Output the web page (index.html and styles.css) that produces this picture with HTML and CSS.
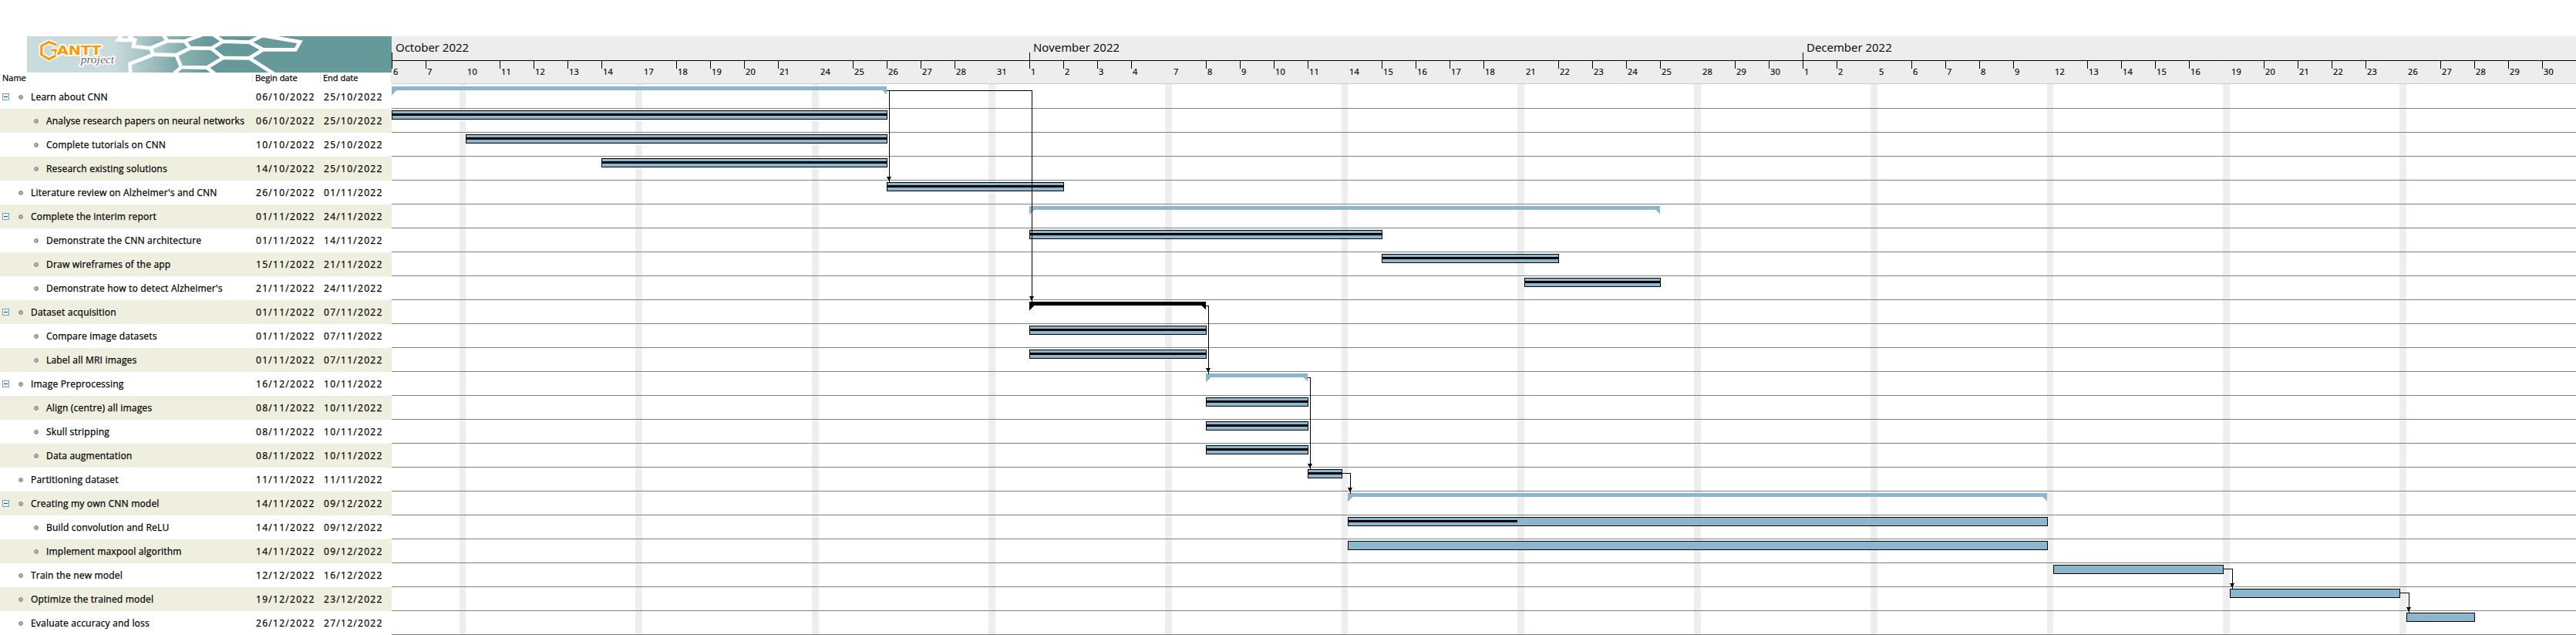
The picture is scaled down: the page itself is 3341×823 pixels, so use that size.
FILE: index.html
```html
<!DOCTYPE html>
<html lang="en">
<head>
<meta charset="utf-8">
<title>GanttProject</title>
<link rel="stylesheet" href="styles.css">
</head>
<body>
<div class="app">
<section class="tasks">
  <svg class="banner" viewBox="105 51 1419 141" preserveAspectRatio="none">
    <defs>
      <linearGradient id="bg" x1="0" x2="1"><stop offset="0" stop-color="#c9dbdb"/><stop offset=".24" stop-color="#c9dbdb"/><stop offset=".34" stop-color="#9dbdbd"/><stop offset=".5" stop-color="#669999"/><stop offset="1" stop-color="#669999"/></linearGradient>
      <linearGradient id="h1" x1="0" x2="1"><stop offset="0" stop-color="#bcd2d2"/><stop offset="1" stop-color="#76a4a4"/></linearGradient>
      <linearGradient id="h2" x1="0" x2="1"><stop offset="0" stop-color="#8fb5b5"/><stop offset="1" stop-color="#669999"/></linearGradient>
    </defs>
    <rect x="105" y="51" width="1419" height="141" fill="url(#bg)"/>
    <path d="M585 97L652 69L718 70L740 97L686 124L597 122Z" fill="url(#h1)"/>
    <path d="M505 158L597 122L686 124L705 171L678 195H508Z" fill="url(#h1)"/>
    <path d="M740 97L822 98L868 135L805 173L705 171L686 124Z" fill="url(#h2)"/>
    <path d="M525 67L652 69L585 97L518 90Z" fill="url(#h1)"/>
    <g class="mesh">
      <path d="M472 48L460 65L525 67L518 90L585 97L597 122L505 158L508 195"/>
      <path d="M500 51L525 67M585 97L652 69L636 48M652 69L718 70L785 46"/>
      <path d="M718 70L740 97L686 124L597 122M740 97L822 98L868 71L832 46M868 71L970 74L1025 46"/>
      <path d="M822 98L868 135L805 173L705 171L686 124M705 171L678 195M805 173L836 197"/>
      <path d="M868 135L970 136L1024 103L970 74M970 136L1066 197M1024 103L1150 103L1167 73L1010 46"/>
    </g>
    <path class="mark-halo" d="M218 84L190 73L161 88V122L190 140L217 126V105H201"/>
    <path class="mark" d="M218 84L190 73L161 88V122L190 140L217 126V105H201"/>
    <text class="brand" x="222" y="123" textLength="172" lengthAdjust="spacingAndGlyphs">ANTT</text>
    <text class="brand-sub" x="314" y="156" textLength="130" lengthAdjust="spacingAndGlyphs">project</text>
  </svg>
  <div class="cols"><span class="c-name">Name</span><span class="c-begin">Begin date</span><span class="c-end">End date</span></div>
  <div class="task group"><i class="toggle"></i><i class="dot"></i><span class="name">Learn about CNN</span><span class="date">06/10/2022</span><span class="date">25/10/2022</span></div>
  <div class="task child"><i class="dot"></i><span class="name">Analyse research papers on neural networks</span><span class="date">06/10/2022</span><span class="date">25/10/2022</span></div>
  <div class="task child"><i class="dot"></i><span class="name">Complete tutorials on CNN</span><span class="date">10/10/2022</span><span class="date">25/10/2022</span></div>
  <div class="task child"><i class="dot"></i><span class="name">Research existing solutions</span><span class="date">14/10/2022</span><span class="date">25/10/2022</span></div>
  <div class="task"><i class="dot"></i><span class="name">Literature review on Alzheimer's and CNN</span><span class="date">26/10/2022</span><span class="date">01/11/2022</span></div>
  <div class="task group"><i class="toggle"></i><i class="dot"></i><span class="name">Complete the interim report</span><span class="date">01/11/2022</span><span class="date">24/11/2022</span></div>
  <div class="task child"><i class="dot"></i><span class="name">Demonstrate the CNN architecture</span><span class="date">01/11/2022</span><span class="date">14/11/2022</span></div>
  <div class="task child"><i class="dot"></i><span class="name">Draw wireframes of the app</span><span class="date">15/11/2022</span><span class="date">21/11/2022</span></div>
  <div class="task child"><i class="dot"></i><span class="name">Demonstrate how to detect Alzheimer's</span><span class="date">21/11/2022</span><span class="date">24/11/2022</span></div>
  <div class="task group"><i class="toggle"></i><i class="dot"></i><span class="name">Dataset acquisition</span><span class="date">01/11/2022</span><span class="date">07/11/2022</span></div>
  <div class="task child"><i class="dot"></i><span class="name">Compare image datasets</span><span class="date">01/11/2022</span><span class="date">07/11/2022</span></div>
  <div class="task child"><i class="dot"></i><span class="name">Label all MRI images</span><span class="date">01/11/2022</span><span class="date">07/11/2022</span></div>
  <div class="task group"><i class="toggle"></i><i class="dot"></i><span class="name">Image Preprocessing</span><span class="date">16/12/2022</span><span class="date">10/11/2022</span></div>
  <div class="task child"><i class="dot"></i><span class="name">Align (centre) all images</span><span class="date">08/11/2022</span><span class="date">10/11/2022</span></div>
  <div class="task child"><i class="dot"></i><span class="name">Skull stripping</span><span class="date">08/11/2022</span><span class="date">10/11/2022</span></div>
  <div class="task child"><i class="dot"></i><span class="name">Data augmentation</span><span class="date">08/11/2022</span><span class="date">10/11/2022</span></div>
  <div class="task"><i class="dot"></i><span class="name">Partitioning dataset</span><span class="date">11/11/2022</span><span class="date">11/11/2022</span></div>
  <div class="task group"><i class="toggle"></i><i class="dot"></i><span class="name">Creating my own CNN model</span><span class="date">14/11/2022</span><span class="date">09/12/2022</span></div>
  <div class="task child"><i class="dot"></i><span class="name">Build convolution and ReLU</span><span class="date">14/11/2022</span><span class="date">09/12/2022</span></div>
  <div class="task child"><i class="dot"></i><span class="name">Implement maxpool algorithm</span><span class="date">14/11/2022</span><span class="date">09/12/2022</span></div>
  <div class="task"><i class="dot"></i><span class="name">Train the new model</span><span class="date">12/12/2022</span><span class="date">16/12/2022</span></div>
  <div class="task"><i class="dot"></i><span class="name">Optimize the trained model</span><span class="date">19/12/2022</span><span class="date">23/12/2022</span></div>
  <div class="task"><i class="dot"></i><span class="name">Evaluate accuracy and loss</span><span class="date">26/12/2022</span><span class="date">27/12/2022</span></div>
</section>
<section class="timeline">
  <header class="scale">
    <div class="months"><span class="month oct">October 2022</span><span class="month nov">November 2022</span><span class="month dec">December 2022</span></div>
    <div class="days">
      <div class="week"><b>6</b><b>7</b></div>
      <div class="week long"><b class="mon">10</b><b>11</b><b>12</b><b>13</b><b>14</b></div>
      <div class="week long"><b class="mon">17</b><b>18</b><b>19</b><b>20</b><b>21</b></div>
      <div class="week long"><b class="mon">24</b><b>25</b><b>26</b><b>27</b><b>28</b></div>
      <div class="week long"><b class="mon">31</b><b>1</b><b>2</b><b>3</b><b>4</b></div>
      <div class="week"><b class="mon">7</b><b>8</b><b>9</b><b>10</b><b>11</b></div>
      <div class="week long"><b class="mon">14</b><b>15</b><b>16</b><b>17</b><b>18</b></div>
      <div class="week long"><b class="mon">21</b><b>22</b><b>23</b><b>24</b><b>25</b></div>
      <div class="week long"><b class="mon">28</b><b>29</b><b>30</b><b>1</b><b>2</b></div>
      <div class="week"><b class="mon">5</b><b>6</b><b>7</b><b>8</b><b>9</b></div>
      <div class="week long"><b class="mon">12</b><b>13</b><b>14</b><b>15</b><b>16</b></div>
      <div class="week long"><b class="mon">19</b><b>20</b><b>21</b><b>22</b><b>23</b></div>
      <div class="week"><b class="mon">26</b><b>27</b><b>28</b><b>29</b><b>30</b></div>
    </div>
  </header>
  <!-- x axis: page pixels, 44 per working day; y axis: 31 per task row, first row at 110 -->
  <svg class="chart" width="2833" height="714" viewBox="508 109 2833 714" shape-rendering="crispEdges">
    <defs>
      <pattern id="rows" x="0" y="110" width="31" height="31" patternUnits="userSpaceOnUse"><rect y="30" width="31" height="1" fill="#808080"/></pattern>
      <path id="arrow" d="M-3 0H3V1H2V3H1V5H-1V3H-2V1H-3Z"/>
    </defs>
    <path class="weekend" d="M596 109h8v713h-8zM824 109h9v713h-9zM1053 109h9v713h-9zM1282 109h9v713h-9zM1511 109h9v713h-9zM1740 109h8v713h-8zM1968 109h9v713h-9zM2197 109h9v713h-9zM2426 109h9v713h-9zM2655 109h8v713h-8zM2883 109h9v713h-9zM3112 109h9v713h-9z"/>
    <rect x="508" y="110" width="2833" height="713" fill="url(#rows)"/>
    <g class="summary">
      <path d="M508 112H1150V123L1144 117H514L508 123Z"/>
      <path d="M1335 267H2153V278L2147 272H1341L1335 278Z"/>
      <path class="critical" d="M1335 391H1564V402L1558 396H1341L1335 402Z"/>
      <path d="M1564 484H1696V495L1690 489H1570L1564 495Z"/>
      <path d="M1748 639H2655V650L2649 644H1754L1748 650Z"/>
    </g>
    <g class="bars">
      <rect x="508.5" y="143.5" width="642" height="11"/>
      <rect x="604.5" y="174.5" width="546" height="11"/>
      <rect x="780.5" y="205.5" width="370" height="11"/>
      <rect x="1150.5" y="236.5" width="229" height="11"/>
      <rect x="1335.5" y="298.5" width="457" height="11"/>
      <rect x="1792.5" y="329.5" width="229" height="11"/>
      <rect x="1977.5" y="360.5" width="176" height="11"/>
      <rect x="1335.5" y="422.5" width="229" height="11"/>
      <rect x="1335.5" y="453.5" width="229" height="11"/>
      <rect x="1564.5" y="515.5" width="132" height="11"/>
      <rect x="1564.5" y="546.5" width="132" height="11"/>
      <rect x="1564.5" y="577.5" width="132" height="11"/>
      <rect x="1696.5" y="608.5" width="44" height="11"/>
      <rect x="1748.5" y="670.5" width="907" height="11"/>
      <rect x="1748.5" y="701.5" width="907" height="11"/>
      <rect x="2663.5" y="732.5" width="220" height="11"/>
      <rect x="2892.5" y="763.5" width="220" height="11"/>
      <rect x="3121.5" y="794.5" width="88" height="11"/>
    </g>
    <path class="progress" d="M508 147h643v3h-643zM604 178h547v3h-547zM780 209h371v3h-371zM1150 240h230v3h-230zM1335 302h458v3h-458zM1792 333h230v3h-230zM1977 364h177v3h-177zM1335 426h230v3h-230zM1335 457h230v3h-230zM1564 519h133v3h-133zM1564 550h133v3h-133zM1564 581h133v3h-133zM1696 612h45v3h-45zM1748 674h220v3h-220z"/>
    <path class="links" d="M1150 117.5H1338.5V391M1153.5 117.5V236M1564 396.5H1567.5V485M1696 489.5H1699.5V608M1741 613.5H1751.5V640M2884 737.5H2895.5V763M3113 768.5H3124.5V794"/>
    <use href="#arrow" x="1153" y="229"/><use href="#arrow" x="1338" y="384"/><use href="#arrow" x="1567" y="477"/><use href="#arrow" x="1699" y="601"/><use href="#arrow" x="1751" y="632"/><use href="#arrow" x="2895" y="756"/><use href="#arrow" x="3124" y="787"/>
  </svg>
</section>
</div>
</body>
</html>
```
FILE: styles.css
```css
body { margin: 0; background: #fff; color: #000; font-family: "Open Sans", "Noto Sans", sans-serif; }
.app { display: flex; width: 3341px; height: 776px; padding-top: 47px; overflow: hidden; }

.tasks { width: 508px; flex: none; }
.banner { display: block; width: 473px; height: 47px; margin-left: 35px; }
.mesh path { fill: none; stroke: #fff; stroke-width: 14; stroke-linejoin: miter; }
.mark-halo { fill: none; stroke: #fff; stroke-width: 19; stroke-linejoin: round; }
.mark { fill: none; stroke: #ff9900; stroke-width: 9; }
.brand, .brand-sub { paint-order: stroke; stroke: #fff; stroke-width: 10; stroke-linejoin: round; }
.brand { font: bold 46px "DejaVu Sans", sans-serif; fill: #ff9900; }
.brand-sub { font: italic 46px "Liberation Serif", serif; fill: #666; }

.cols { display: flex; height: 16px; padding-left: 3px; font-size: 11px; line-height: 14px; font-weight: 500; -webkit-text-stroke: .25px #000; }
.cols span { box-sizing: border-box; white-space: nowrap; }
.c-name { width: 324px; }
.c-begin, .c-end { height: 11px; margin-top: 2px; padding-left: 3px; border-left: 1px solid #e2e2e2; line-height: 10px; }
.c-begin { width: 88px; }
.c-end { width: 93px; border-right: 1px solid #e2e2e2; }

.task { display: flex; align-items: center; height: 31px; padding-left: 24px; box-sizing: border-box; font-size: 12px; line-height: 31px; white-space: nowrap; -webkit-text-stroke: .25px #000; }
.task:nth-child(even) { background: #eeefdf; }
.task:nth-child(odd) { background: #fff; }
.group { padding-left: 3px; }
.child { padding-left: 44px; }
.toggle { box-sizing: border-box; width: 9px; height: 9px; margin-right: 12px; border: 1px solid #7b9ebd; background: linear-gradient(#234a7c, #234a7c) center / 5px 1px no-repeat, #e6f6fd; }
.dot { box-sizing: border-box; width: 6px; height: 6px; margin-right: 10px; border: 1px solid #858585; border-radius: 50%; background: #b0b0b0; }
.name { flex: 1; letter-spacing: .2px; }
.date { width: 88px; letter-spacing: 1.3px; }
.date:last-child { width: 88px; }

.timeline { width: 2833px; flex: none; }
.scale { box-sizing: border-box; height: 62px; background: #ededed; border-bottom: 1px solid #ccc; }
.months { display: flex; height: 31px; border-bottom: 1px solid #000; font-size: 15px; line-height: 29px; }
.month { box-sizing: border-box; padding-left: 5px; background: linear-gradient(#000, #000) 0 21px / 1px 10px no-repeat; white-space: nowrap; }
.oct { width: 827px; }
.nov { width: 1003px; }
.dec { width: 1003px; }
.days { display: flex; height: 29px; overflow: hidden; }
.week { display: flex; flex: none; padding-right: 8px; }
.long { padding-right: 9px; }
.week b { box-sizing: border-box; width: 44px; padding: 7px 0 0 2px; background: linear-gradient(#000, #000) 0 0 / 1px 10px no-repeat; font-weight: 400; font-size: 11px; line-height: 13px; letter-spacing: .3px; -webkit-text-stroke: .2px #000; }
.week .mon { background: none; }

.chart { display: block; }
.weekend { fill: #eee; }
.summary { fill: #8cb6ce; }
.critical { fill: #000; }
.bars rect { fill: #8cb6ce; stroke: #000; }
.links { fill: none; stroke: #000; }
```
